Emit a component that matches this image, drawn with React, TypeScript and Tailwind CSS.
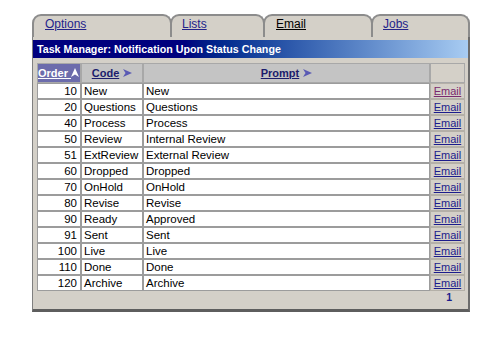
import React from "react";

const rows: [number, string, string][] = [
  [10, "New", "New"],
  [20, "Questions", "Questions"],
  [40, "Process", "Process"],
  [50, "Review", "Internal Review"],
  [51, "ExtReview", "External Review"],
  [60, "Dropped", "Dropped"],
  [70, "OnHold", "OnHold"],
  [80, "Revise", "Revise"],
  [90, "Ready", "Approved"],
  [91, "Sent", "Sent"],
  [100, "Live", "Live"],
  [110, "Done", "Done"],
  [120, "Archive", "Archive"],
];

function RightArrow() {
  return (
    <svg width="9" height="8" viewBox="0 0 9 8" className="inline-block ml-[4px] align-[0px]">
      <polygon points="0,0 9,4 0,8 2.5,4" fill="#5a5ab4" />
    </svg>
  );
}

function UpArrow() {
  return (
    <svg width="8" height="9" viewBox="0 0 8 9" className="inline-block align-[0px]">
      <polygon points="4,0 8,9 4,6.5 0,9" fill="#ffffff" />
    </svg>
  );
}

export default function App() {
  const tabBase =
    "h-[23px] shrink-0 rounded-t-[9px] border-t-2 border-l-2 border-r-2 border-[#8c8c8c] bg-[#d4d0c8] leading-[13px] text-[12px] pt-[2px]";
  return (
    <div
      className="w-[500px] h-[346px] bg-white pt-[14px] pl-[32px]"
      style={{ fontFamily: '"Liberation Sans", Arial, sans-serif' }}
    >
      <div className="w-[438px]">
        {/* Tabs */}
        <div className="flex h-[23px] items-end">
          <div className={`${tabBase} w-[140px] pl-[11px]`}>
            <span className="underline text-[#23238a]">Options</span>
          </div>
          <div className={`${tabBase} w-[95px] -ml-[2px] pl-[10px]`}>
            <span className="underline text-[#23238a]">Lists</span>
          </div>
          <div className={`${tabBase} w-[110px] -ml-[2px] pl-[11px] relative`}>
            <span className="underline text-black">Email</span>
          </div>
          <div className={`${tabBase} w-[99px] -ml-[2px] pl-[10px]`}>
            <span className="underline text-[#23238a]">Jobs</span>
          </div>
        </div>

        {/* Panel */}
        <div className="h-[275px] bg-[#d4d0c8] border-l border-l-[#808080] border-r-2 border-r-[#6c6c6c] border-b-[3px] border-b-[#5e5e5e] pt-[3px]">
          <div className="h-[18px] bg-linear-to-r from-[#00007e] from-35% to-[#a8ccf2] pl-[4px] leading-[18px] text-[10.7px] font-bold text-white whitespace-nowrap">
            Task Manager: Notification Upon Status Change
          </div>

          <table className="mt-[5px] ml-[4px] w-[428px] table-fixed border-separate border-spacing-0 text-[11.5px] text-black">
            <colgroup>
              <col className="w-[44px]" />
              <col className="w-[62px]" />
              <col className="w-[287px]" />
              <col className="w-[35px]" />
            </colgroup>
            <thead>
              <tr className="h-[20px]">
                <th className="border border-[#a8a8a8] bg-[#6c6cac] p-0 pl-[0px] text-left text-[11px] font-bold leading-[18px] text-white whitespace-nowrap">
                  <span className="underline">Order </span>
                  <UpArrow />
                </th>
                <th className="border border-[#a8a8a8] bg-[#c4c4c4] p-0 text-center text-[11px] font-bold leading-[18px] text-[#1c1c6c] whitespace-nowrap">
                  <span className="underline">Code</span>
                  <RightArrow />
                </th>
                <th className="border border-[#a8a8a8] bg-[#c4c4c4] p-0 text-center text-[11px] font-bold leading-[18px] text-[#1c1c6c] whitespace-nowrap">
                  <span className="underline">Prompt</span>
                  <RightArrow />
                </th>
                <th className="border border-[#a8a8a8] bg-[#d4d0c8] p-0"></th>
              </tr>
            </thead>
            <tbody>
              {rows.map(([order, code, prompt], i) => (
                <tr key={order} className="h-[16px]">
                  <td className="border border-[#9c9c9c] bg-white p-0 pr-[3px] text-right leading-[14px]">
                    {order}
                  </td>
                  <td className="border border-[#9c9c9c] bg-white p-0 pl-[2px] leading-[14px] whitespace-nowrap overflow-hidden">
                    {code}
                  </td>
                  <td className="border border-[#9c9c9c] bg-white p-0 pl-[2px] leading-[14px] whitespace-nowrap">
                    {prompt}
                  </td>
                  <td className="border border-[#b4b0a8] bg-[#d4d0c8] p-0 text-center text-[11px] leading-[14px]">
                    <span className={i === 0 ? "underline text-[#7a2a6e]" : "underline text-[#1c1c8c]"}>
                      Email
                    </span>
                  </td>
                </tr>
              ))}
              <tr className="h-[12px]">
                <td
                  colSpan={4}
                  className="bg-[#d4d0c8] p-0 pr-[13px] text-right text-[10.5px] font-bold leading-[12px] text-[#1c1c8c]"
                >
                  1
                </td>
              </tr>
            </tbody>
          </table>
        </div>
      </div>
    </div>
  );
}
